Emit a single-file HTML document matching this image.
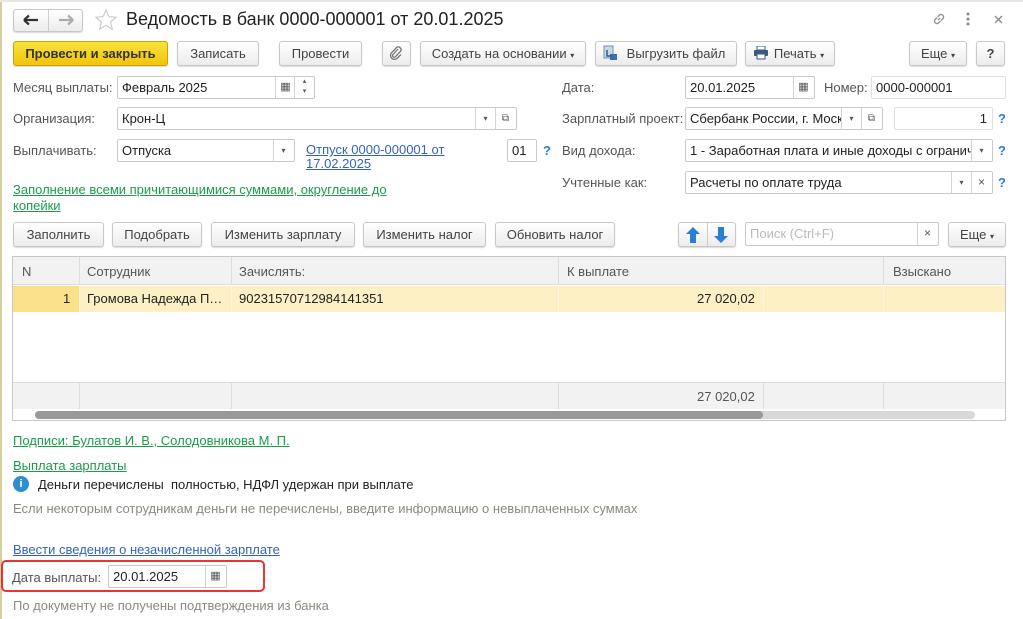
<!DOCTYPE html>
<html><head><meta charset="utf-8"><style>
*{box-sizing:border-box;margin:0;padding:0}
body{width:1023px;height:619px;background:#fff;font-family:"Liberation Sans",Arial,sans-serif;font-size:13px;color:#333;position:relative;overflow:hidden}
.a{position:absolute;white-space:nowrap}
.btn{position:absolute;height:25px;border:1px solid #c8c8c8;border-radius:3px;background:linear-gradient(#fff,#ececec);box-shadow:0 1px 1px rgba(0,0,0,.15);text-align:center;line-height:23px;color:#444;font-size:13px;white-space:nowrap}
.fld{position:absolute;height:23px;border:1px solid #c9c9c9;border-radius:2px;background:#fff;line-height:21px;padding-left:4px;color:#222;white-space:nowrap;overflow:hidden}
.dd{position:absolute;top:0;width:20px;height:21px;border-left:1px solid #d4d4d4;text-align:center;font-size:8px;color:#555;line-height:21px;background:#fff}
.lbl{position:absolute;color:#555;white-space:nowrap}
.q{position:absolute;color:#2a7fd4;font-weight:bold}
.lnk{position:absolute;color:#1a9c4a;text-decoration:underline;white-space:nowrap}
.blk{position:absolute;color:#3362c4;text-decoration:underline;white-space:nowrap}
.c{position:absolute;border-right:1px solid #ddd;height:100%;top:0}
svg{position:absolute}
</style></head><body>
<div class="a" style="left:0;top:0;width:2px;height:619px;background:#d6cfa0"></div>
<div class="a" style="left:0;top:0;width:1023px;height:2px;background:#e6e6e6"></div>
<!-- nav -->
<div class="btn" style="left:13px;top:9px;width:70px;height:23px"></div>
<div class="a" style="left:48px;top:10px;width:1px;height:21px;background:#ccc"></div>
<svg style="left:23px;top:14px" width="16" height="12" viewBox="0 0 16 12"><path d="M1 6H15M1 6L6 1.5M1 6L6 10.5" stroke="#333" stroke-width="2.2" fill="none"/></svg>
<svg style="left:58px;top:14px" width="16" height="12" viewBox="0 0 16 12"><path d="M1 6H15M15 6L10 1.5M15 6L10 10.5" stroke="#aaa" stroke-width="2.2" fill="none"/></svg>
<svg style="left:94px;top:8px" width="24" height="24" viewBox="0 0 24 24"><path d="M12 2L14.9 8.6L22 9.3L16.6 14L18.2 21L12 17.3L5.8 21L7.4 14L2 9.3L9.1 8.6Z" stroke="#ccc" stroke-width="1.2" fill="none"/></svg>
<div class="a" style="left:126px;top:9px;font-size:18px;color:#222">Ведомость в банк 0000-000001 от 20.01.2025</div>
<svg style="left:931px;top:11px" width="16" height="16" viewBox="0 0 16 16"><path d="M7 9L9 7M6 6.5L4 8.5A2.5 2.5 0 0 0 7.5 12L9.5 10M10 9.5L12 7.5A2.5 2.5 0 0 0 8.5 4L6.5 6" stroke="#999" stroke-width="1.5" fill="none"/></svg>
<svg style="left:966px;top:12px" width="4" height="14" viewBox="0 0 4 14"><circle cx="2" cy="2" r="1.5" fill="#888"/><circle cx="2" cy="7" r="1.5" fill="#888"/><circle cx="2" cy="12" r="1.5" fill="#888"/></svg>
<svg style="left:994px;top:15px" width="9" height="9" viewBox="0 0 9 9"><path d="M1 1L8 8M8 1L1 8" stroke="#888" stroke-width="1.3"/></svg>
<!-- toolbar -->
<div class="btn" style="left:13px;top:41px;width:155px;background:linear-gradient(#fbe23a,#f1c40c);border-color:#c9a400;color:#333;font-weight:bold">Провести и закрыть</div>
<div class="btn" style="left:177px;top:41px;width:82px">Записать</div>
<div class="btn" style="left:279px;top:41px;width:83px">Провести</div>
<div class="btn" style="left:382px;top:41px;width:29px"></div>
<svg style="left:389px;top:46px" width="14" height="14" viewBox="0 0 14 14"><path d="M9 3L4 8.5A1.6 1.6 0 0 0 6.3 10.8L11.5 5.3A2.8 2.8 0 0 0 7.5 1.5L2.3 7A4 4 0 0 0 8 12.5L12 8.5" stroke="#777" stroke-width="1.3" fill="none"/></svg>
<div class="btn" style="left:420px;top:41px;width:166px">Создать на основании <span style="font-size:8px">▾</span></div>
<div class="btn" style="left:595px;top:41px;width:142px;padding-left:20px">Выгрузить файл</div>
<svg style="left:603px;top:45px" width="16" height="16" viewBox="0 0 16 16"><rect x="1" y="1" width="9" height="12" fill="#c9d6e6" stroke="#7a8fa8"/><path d="M7 9H14V15H7Z" fill="#3a6fb0"/><path d="M4 5V11H9" stroke="#2a5a9a" stroke-width="1.5" fill="none"/></svg>
<div class="btn" style="left:745px;top:41px;width:90px;padding-left:18px">Печать <span style="font-size:8px">▾</span></div>
<svg style="left:753px;top:46px" width="16" height="14" viewBox="0 0 16 14"><rect x="4" y="0" width="8" height="4" fill="#fff" stroke="#3a5a80"/><rect x="1" y="4" width="14" height="6" rx="1" fill="#3a5a80"/><rect x="4" y="8" width="8" height="5" fill="#fff" stroke="#3a5a80"/></svg>
<div class="btn" style="left:909px;top:41px;width:58px">Еще <span style="font-size:8px">▾</span></div>
<div class="btn" style="left:976px;top:41px;width:29px;font-weight:bold">?</div>
<!-- row 1 -->
<div class="lbl" style="left:13px;top:80px">Месяц выплаты:</div>
<div class="fld" style="left:117px;top:76px;width:198px">Февраль 2025<div class="dd" style="left:157px;font-size:11px">▦</div><div class="dd" style="left:176px;line-height:10px;font-size:7px">▴<br>▾</div></div>
<div class="lbl" style="left:562px;top:80px">Дата:</div>
<div class="fld" style="left:685px;top:76px;width:130px">20.01.2025<div class="dd" style="left:107px;font-size:11px">▦</div></div>
<div class="lbl" style="left:824px;top:80px">Номер:</div>
<div class="fld" style="left:871px;top:76px;width:135px;border-color:#e0e0e0">0000-000001</div>
<!-- row 2 -->
<div class="lbl" style="left:13px;top:111px">Организация:</div>
<div class="fld" style="left:117px;top:107px;width:400px">Крон-Ц<div class="dd" style="left:357px">▾</div><div class="dd" style="left:377px;font-size:10px">⧉</div></div>
<div class="lbl" style="left:562px;top:111px">Зарплатный проект:</div>
<div class="fld" style="left:685px;top:107px;width:198px">Сбербанк России, г. Моск<div class="dd" style="left:155px">▾</div><div class="dd" style="left:175px;font-size:10px">⧉</div></div>
<div class="fld" style="left:894px;top:107px;width:99px;text-align:right;padding-right:5px;border-color:#e0e0e0">1</div>
<div class="q" style="left:998px;top:111px">?</div>
<!-- row 3 -->
<div class="lbl" style="left:13px;top:143px">Выплачивать:</div>
<div class="fld" style="left:117px;top:139px;width:178px">Отпуска<div class="dd" style="left:155px">▾</div></div>
<div class="blk" style="left:306px;top:143px;line-height:14px">Отпуск 0000-000001 от<br>17.02.2025</div>
<div class="fld" style="left:507px;top:139px;width:30px">01</div>
<div class="q" style="left:543px;top:143px">?</div>
<div class="lbl" style="left:562px;top:143px">Вид дохода:</div>
<div class="fld" style="left:685px;top:139px;width:308px">1 - Заработная плата и иные доходы с огранич<div class="dd" style="left:285px">▾</div></div>
<div class="q" style="left:998px;top:143px">?</div>
<!-- row 4 -->
<div class="lnk" style="left:13px;top:182px;line-height:16px">Заполнение всеми причитающимися суммами, округление до<br>копейки</div>
<div class="lbl" style="left:562px;top:175px">Учтенные как:</div>
<div class="fld" style="left:685px;top:171px;width:308px">Расчеты по оплате труда<div class="dd" style="left:265px">▾</div><div class="dd" style="left:285px;font-size:12px">×</div></div>
<div class="q" style="left:998px;top:175px">?</div>
<!-- table toolbar -->
<div class="btn" style="left:13px;top:222px;width:91px">Заполнить</div>
<div class="btn" style="left:112px;top:222px;width:90px">Подобрать</div>
<div class="btn" style="left:211px;top:222px;width:144px">Изменить зарплату</div>
<div class="btn" style="left:363px;top:222px;width:123px">Изменить налог</div>
<div class="btn" style="left:495px;top:222px;width:120px">Обновить налог</div>
<div class="btn" style="left:678px;top:222px;width:58px"></div>
<div class="a" style="left:707px;top:223px;width:1px;height:23px;background:#ccc"></div>
<svg style="left:686px;top:227px" width="14" height="16" viewBox="0 0 14 16"><path d="M7 0L14 7H10V16H4V7H0Z" fill="#2a7fd4"/></svg>
<svg style="left:714px;top:227px" width="14" height="16" viewBox="0 0 14 16"><path d="M7 16L14 9H10V0H4V9H0Z" fill="#2a7fd4"/></svg>
<div class="fld" style="left:745px;top:222px;width:194px;height:24px;color:#bbb">Поиск (Ctrl+F)<div class="dd" style="left:171px;font-size:12px;height:22px">×</div></div>
<div class="btn" style="left:948px;top:222px;width:58px">Еще <span style="font-size:8px">▾</span></div>
<!-- table -->
<div class="a" style="left:12px;top:256px;width:994px;height:165px;border:1px solid #c8c8c8;background:#fff">
 <div class="a" style="left:0;top:0;width:992px;height:28px;background:#f2f2f2;border-bottom:1px solid #ddd;color:#555">
  <div class="c" style="left:66px"></div><div class="c" style="left:218px"></div><div class="c" style="left:545px"></div><div class="c" style="left:870px"></div>
  <div class="a" style="left:9px;top:7px">N</div><div class="a" style="left:74px;top:7px">Сотрудник</div><div class="a" style="left:226px;top:7px">Зачислять:</div><div class="a" style="left:554px;top:7px">К выплате</div><div class="a" style="left:880px;top:7px">Взыскано</div>
 </div>
 <div class="a" style="left:0;top:29px;width:992px;height:26px;background:#fdf0c4;color:#222">
  <div class="a" style="left:0;top:0;width:66px;height:26px;background:#fbe08a"></div>
  <div class="c" style="left:66px;border-color:#fff6dc"></div><div class="c" style="left:218px;border-color:#fff6dc"></div><div class="c" style="left:545px;border-color:#fff6dc"></div><div class="c" style="left:750px;border-color:#fff6dc"></div><div class="c" style="left:870px;border-color:#fff6dc"></div>
  <div class="a" style="left:50px;top:5px">1</div><div class="a" style="left:74px;top:5px">Громова Надежда П…</div><div class="a" style="left:226px;top:5px">90231570712984141351</div><div class="a" style="left:684px;top:5px">27 020,02</div>
 </div>
 <div class="a" style="left:0;top:125px;width:992px;height:27px;background:#f2f2f2;border-top:1px solid #ddd;color:#555">
  <div class="c" style="left:66px"></div><div class="c" style="left:218px"></div><div class="c" style="left:545px"></div><div class="c" style="left:750px"></div><div class="c" style="left:870px"></div>
  <div class="a" style="left:684px;top:6px">27 020,02</div>
 </div>
 <div class="a" style="left:22px;top:154px;width:940px;height:8px;border-radius:4px;background:#d8d8d8"></div>
 <div class="a" style="left:22px;top:154px;width:728px;height:8px;border-radius:4px;background:#999"></div>
</div>
<!-- bottom -->
<div class="lnk" style="left:13px;top:433px">Подписи: Булатов И. В., Солодовникова М. П.</div>
<div class="lnk" style="left:13px;top:458px">Выплата зарплаты</div>
<div class="a" style="left:13px;top:476px;width:16px;height:16px;border-radius:50%;background:#2d8fd0;color:#fff;font-weight:bold;font-size:11px;text-align:center;line-height:16px">i</div>
<div class="a" style="left:38px;top:477px;color:#222">Деньги перечислены&nbsp; полностью, НДФЛ удержан при выплате</div>
<div class="a" style="left:13px;top:501px;color:#8a8a80">Если некоторым сотрудникам деньги не перечислены, введите информацию о невыплаченных суммах</div>
<div class="blk" style="left:13px;top:542px">Ввести сведения о незачисленной зарплате</div>
<div class="a" style="left:1px;top:560px;width:264px;height:32px;border:2px solid #e53535;border-radius:5px"></div>
<div class="lbl" style="left:12px;top:570px">Дата выплаты:</div>
<div class="fld" style="left:108px;top:565px;width:119px">20.01.2025<div class="dd" style="left:96px;font-size:11px">▦</div></div>
<div class="a" style="left:13px;top:598px;color:#8a8a80">По документу не получены подтверждения из банка</div>
</body></html>
